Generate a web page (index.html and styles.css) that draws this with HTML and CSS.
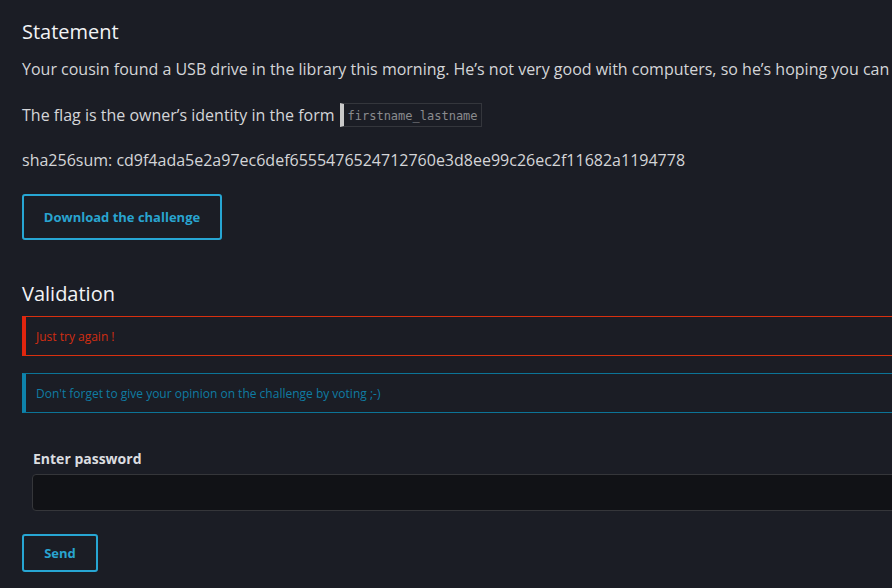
FILE: index.html
```html
<!DOCTYPE html>
<html lang="en">
<head>
<meta charset="utf-8">
<title>Challenge</title>
<link rel="stylesheet" href="styles.css">
</head>
<body>
<main class="page">
  <h2 class="title">Statement</h2>
  <p class="text">Your cousin found a USB drive in the library this morning. He’s not very good with computers, so he’s hoping you can find the owner of this stick!</p>
  <p class="text flag">The flag is the owner’s identity in the form <code class="code">firstname_lastname</code></p>
  <p class="text">sha256sum: cd9f4ada5e2a97ec6def6555476524712760e3d8ee99c26ec2f11682a1194778</p>
  <a class="btn btn-download" href="#">Download the challenge</a>

  <h2 class="title title-validation">Validation</h2>
  <div class="alert alert-error">Just try again !</div>
  <div class="alert alert-info">Don't forget to give your opinion on the challenge by voting ;-)</div>

  <form class="form">
    <label class="label" for="pw">Enter password</label>
    <input class="input" id="pw" type="password">
  </form>
  <a class="btn btn-send" href="#">Send</a>
</main>
</body>
</html>
```

FILE: styles.css
```css
html, body {
  margin: 0;
  padding: 0;
  background: #1b1d25;
  overflow: hidden;
  height: 100%;
}
body {
  font-family: "Open Sans", "Noto Sans", sans-serif;
  color: #d4d5d8;
}
.page {
  width: 1300px;
  padding: 20px 0 0 22px;
  display: flex;
  flex-direction: column;
  align-items: flex-start;
}
.title {
  margin: 0;
  font-size: 20px;
  line-height: 24px;
  font-weight: 400;
  color: #f2f3f5;
}
.text {
  margin: 13px 0 0;
  font-size: 16px;
  line-height: 24px;
  white-space: nowrap;
}
.flag {
  margin-top: 22px;
  display: flex;
  align-items: center;
  gap: 5px;
}
.flag + .text {
  margin-top: 21px;
}
.code {
  font-family: "DejaVu Sans Mono", "Liberation Mono", monospace;
  font-size: 12px;
  color: #8a8b8e;
  height: 24px;
  line-height: 24px;
  box-sizing: border-box;
  border: 1px solid #34363c;
  border-left: 4px solid #c9c9c9;
  padding: 0 3px 0 4px;
}
.btn {
  display: flex;
  align-items: center;
  justify-content: center;
  box-sizing: border-box;
  border: 2px solid #27a6d3;
  border-radius: 3px;
  color: #29a4d0;
  font-weight: 700;
  font-size: 13px;
  text-decoration: none;
}
.btn-download {
  margin-top: 22px;
  width: 200px;
  height: 46px;
}
.title-validation {
  margin-top: 42px;
}
.alert {
  box-sizing: border-box;
  width: 100%;
  height: 40px;
  display: flex;
  align-items: center;
  padding-left: 10px;
  font-size: 12px;
  font-family: "Open Sans", "Noto Sans", sans-serif;
}
.alert-error {
  margin-top: 10px;
  border: 1px solid #d9300f;
  border-left: 4px solid #e0250e;
  color: #d22d12;
}
.alert-info {
  margin-top: 17px;
  border: 1px solid #0c7497;
  border-left: 4px solid #0e82aa;
  color: #0f7ca3;
}
.form {
  margin-top: 36px;
  width: 100%;
  box-sizing: border-box;
  padding-left: 10px;
  display: flex;
  flex-direction: column;
  gap: 5px;
}
.label {
  font-size: 14px;
  line-height: 20px;
  font-weight: 700;
  color: #dcdde0;
  padding-left: 1px;
}
.input {
  box-sizing: border-box;
  width: 100%;
  height: 37px;
  background: #111216;
  border: 1px solid #35363a;
  border-radius: 4px;
  margin: 0;
  color: #ddd;
}
.btn-send {
  margin-top: 23px;
  width: 76px;
  height: 38px;
}
```
